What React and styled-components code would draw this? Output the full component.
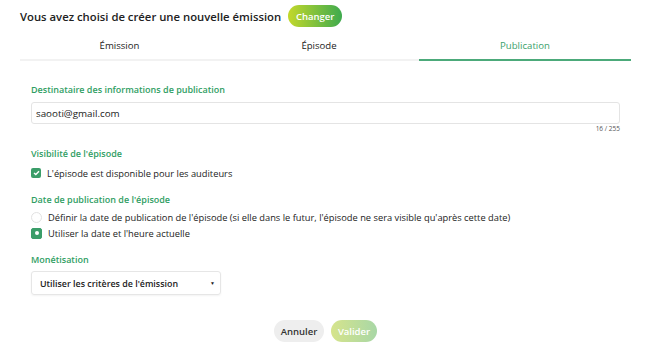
import React from "react";
import styled, { createGlobalStyle } from "styled-components";

const Global = createGlobalStyle`
  html, body { margin: 0; padding: 0; background: #fff; }
  body { font-family: "Open Sans", "Liberation Sans", sans-serif; color: #333; }
`;

const Page = styled.div`
  width: 650px;
  height: 361px;
  box-sizing: border-box;
  padding: 5px 20px 0 20px;
  display: flex;
  flex-direction: column;
`;

const Header = styled.div`
  display: flex;
  align-items: center;
  gap: 7px;
  height: 22px;
`;

const Title = styled.h1`
  margin: 0;
  font-size: 11.3px;
  font-weight: 600;
  color: #222;
`;

const PillButton = styled.button`
  border: none;
  border-radius: 11px;
  height: 22px;
  width: ${(p) => p.$w}px;
  padding: 0;
  font-family: inherit;
  font-size: 9.5px;
  font-weight: 600;
  cursor: pointer;
  color: ${(p) => (p.$variant === "gray" ? "#333" : "#fff")};
  background: ${(p) =>
    p.$variant === "gray"
      ? "#eeeeee"
      : p.$variant === "disabled"
      ? "linear-gradient(90deg, #d6e48c, #a8d7a6)"
      : "linear-gradient(90deg, #c3d82b, #3eaa4e)"};
`;

const Tabs = styled.div`
  display: grid;
  grid-template-columns: 199px 200px 212px;
  margin-top: 7px;
  width: 611px;
  border-bottom: 2px solid #f2f2f2;
`;

const Tab = styled.div`
  text-align: center;
  font-size: 9.6px;
  font-weight: 500;
  height: 25px;
  line-height: 23px;
  color: ${(p) => (p.$active ? "#3a9f6b" : "#222")};
  border-bottom: 2px solid ${(p) => (p.$active ? "#4caa7a" : "transparent")};
  margin-bottom: -2px;
`;

const Form = styled.div`
  padding: 22px 11px 0 11px;
  display: flex;
  flex-direction: column;
`;

const Label = styled.div`
  color: #2f9e63;
  font-size: 9px;
  font-weight: 600;
  margin-bottom: ${(p) => p.$mb || 5}px;
  line-height: 14px;
`;

const Input = styled.input`
  box-sizing: border-box;
  width: 589px;
  height: 22px;
  border: 1px solid #e4e4e4;
  border-radius: 3px;
  padding: 0 4px;
  font-family: inherit;
  font-size: 9.8px;
  color: #222;
  outline: none;
`;

const Counter = styled.div`
  width: 589px;
  text-align: right;
  font-size: 6.5px;
  line-height: 8px;
  color: #555;
  margin-top: 1px;
  margin-bottom: 14px;
`;

const OptionRow = styled.label`
  display: flex;
  align-items: center;
  gap: 6px;
  font-size: 9.3px;
  color: #222;
  height: 16px;
  margin-bottom: ${(p) => p.$mb || 0}px;
`;

const CheckBox = styled.span`
  width: 10px;
  height: 10px;
  border-radius: 2px;
  background: #3b9d69;
  display: flex;
  align-items: center;
  justify-content: center;
`;

const Radio = styled.span`
  box-sizing: border-box;
  width: 11px;
  height: 11px;
  border-radius: ${(p) => (p.$checked ? "2px" : "50%")};
  background: ${(p) => (p.$checked ? "#3b9d69" : "#fff")};
  border: 1px solid ${(p) => (p.$checked ? "#3b9d69" : "#e2e2e2")};
  display: flex;
  align-items: center;
  justify-content: center;
  &::after {
    content: "";
    display: ${(p) => (p.$checked ? "block" : "none")};
    width: 4px;
    height: 4px;
    border-radius: 50%;
    background: #fff;
  }
`;

const Select = styled.div`
  box-sizing: border-box;
  width: 190px;
  height: 24px;
  border: 1px solid #e6e6e6;
  border-radius: 3px;
  box-shadow: 0 1px 2px rgba(0, 0, 0, 0.05);
  display: flex;
  align-items: center;
  justify-content: space-between;
  padding: 0 5px 0 8px;
  font-size: 8.9px;
  font-weight: 600;
  color: #222;
`;

const Caret = styled.span`
  font-size: 5px;
  color: #222;
`;

const Actions = styled.div`
  display: flex;
  justify-content: center;
  gap: 7px;
  margin-top: 25px;
  padding-left: 1px;
`;

export default function App() {
  return (
    <>
      <Global />
      <Page>
        <Header>
          <Title>Vous avez choisi de créer une nouvelle émission</Title>
          <PillButton $w={54}>Changer</PillButton>
        </Header>
        <Tabs>
          <Tab>Émission</Tab>
          <Tab>Épisode</Tab>
          <Tab $active>Publication</Tab>
        </Tabs>
        <Form>
          <Label>Destinataire des informations de publication</Label>
          <Input defaultValue="saooti@gmail.com" />
          <Counter>16 / 255</Counter>
          <Label $mb={4}>Visibilité de l'épisode</Label>
          <OptionRow $mb={12}>
            <CheckBox>
              <svg width="7" height="6" viewBox="0 0 7 6">
                <path d="M1 3 L2.8 4.6 L6 1.2" stroke="#fff" strokeWidth="1.4" fill="none" />
              </svg>
            </CheckBox>
            L'épisode est disponible pour les auditeurs
          </OptionRow>
          <Label $mb={2}>Date de publication de l'épisode</Label>
          <OptionRow>
            <Radio />
            Définir la date de publication de l'épisode (si elle dans le futur, l'épisode ne sera visible qu'après cette date)
          </OptionRow>
          <OptionRow $mb={12}>
            <Radio $checked />
            Utiliser la date et l'heure actuelle
          </OptionRow>
          <Label $mb={4}>Monétisation</Label>
          <Select>
            Utiliser les critères de l'émission
            <Caret>▼</Caret>
          </Select>
        </Form>
        <Actions>
          <PillButton $variant="gray" $w={50}>Annuler</PillButton>
          <PillButton $variant="disabled" $w={46}>Valider</PillButton>
        </Actions>
      </Page>
    </>
  );
}
